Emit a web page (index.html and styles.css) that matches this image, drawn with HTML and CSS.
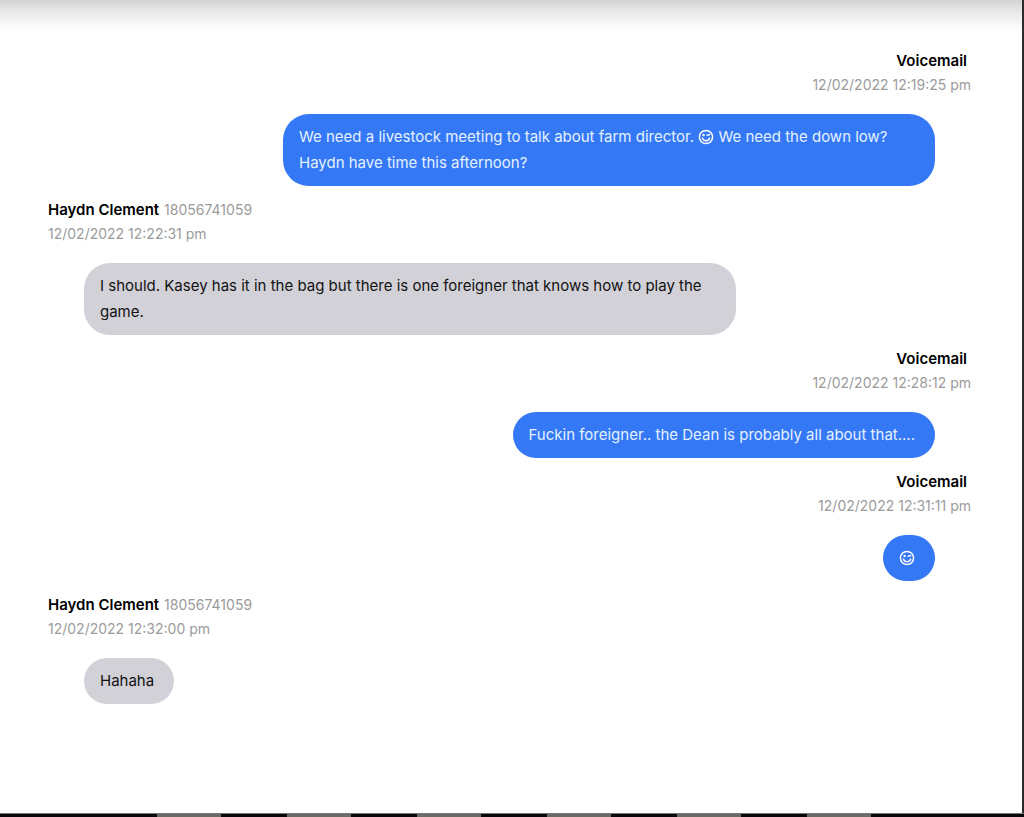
FILE: index.html
```html
<!DOCTYPE html>
<html lang="en">
<head>
  <meta charset="UTF-8">
  <meta name="viewport" content="width=device-width, initial-scale=1.0">
  <title>Messages</title>
  <link rel="stylesheet" href="styles.css">
</head>
<body>

  <!-- Wink face, reused inside the bubbles -->
  <svg class="sprite" aria-hidden="true">
    <symbol id="wink" viewBox="0 0 16 16">
      <circle cx="8" cy="8" r="6.6" fill="none" stroke="currentColor" stroke-width="1.5"/>
      <circle cx="5.6" cy="6" r="1.2" fill="currentColor"/>
      <path d="M9.2 6.2l2.4-.6" fill="none" stroke="currentColor" stroke-width="1.5" stroke-linecap="round"/>
      <path d="M4.4 9.2c1.3 3.3 5.9 3.3 7.2 0" fill="none" stroke="currentColor" stroke-width="1.6" stroke-linecap="round"/>
    </symbol>
  </svg>

  <main class="chat">
    <section class="message sent">
      <div class="meta">
        <div class="sender"><span class="name">Voicemail</span></div>
        <time class="time">12/02/2022 12:19:25 pm</time>
      </div>
      <p class="bubble">We need a livestock meeting to talk about farm director. <svg class="emoji" role="img" aria-label="wink"><use href="#wink"/></svg> We need the down low? Haydn have time this afternoon?</p>
    </section>

    <section class="message received">
      <div class="meta">
        <div class="sender"><span class="name">Haydn Clement</span> <span class="number">18056741059</span></div>
        <time class="time">12/02/2022 12:22:31 pm</time>
      </div>
      <p class="bubble">I should. Kasey has it in the bag but there is one foreigner that knows how to play the game.</p>
    </section>

    <section class="message sent">
      <div class="meta">
        <div class="sender"><span class="name">Voicemail</span></div>
        <time class="time">12/02/2022 12:28:12 pm</time>
      </div>
      <p class="bubble">Fuckin foreigner.. the Dean is probably all about that....</p>
    </section>

    <section class="message sent">
      <div class="meta">
        <div class="sender"><span class="name">Voicemail</span></div>
        <time class="time">12/02/2022 12:31:11 pm</time>
      </div>
      <p class="bubble"><svg class="emoji" role="img" aria-label="wink"><use href="#wink"/></svg></p>
    </section>

    <section class="message received">
      <div class="meta">
        <div class="sender"><span class="name">Haydn Clement</span> <span class="number">18056741059</span></div>
        <time class="time">12/02/2022 12:32:00 pm</time>
      </div>
      <p class="bubble">Hahaha</p>
    </section>
  </main>

  <div class="strip"></div>

</body>
</html>
```

FILE: styles.css
```css
/* Global styling */
* { box-sizing: border-box; }
body { display: flex; flex-direction: column; min-height: 100vh; margin: 0; background-color: #fff; font-family: Inter, sans-serif; font-size: 15px; font-optical-sizing: none; line-height: 26px; color: #111; }
.sprite { display: none; }

/* Conversation */
.chat { display: flex; flex-direction: column; flex: 1; gap: 12px; padding: 49px 51px 48px 48px; border-right: 2px solid #2b2b2b; background: linear-gradient(#d2d2d2, #e6e6e6 10px, #fafafa 26px, #fff 36px); }
.message { display: flex; flex-direction: column; align-items: flex-start; gap: 17px; }
.sent { align-items: flex-end; }

/* Sender and time */
.meta { line-height: 24px; font-size: 14px; color: #9b9b9b; }
.sent .meta { text-align: right; }
.sender { display: flex; gap: 5px; align-items: baseline; height: 24px; }
.sent .sender { justify-content: flex-end; padding-right: 4px; }
.name { font-size: 15px; font-weight: 600; color: #000; }
.time { display: block; }

/* Bubbles */
.bubble { max-width: 652px; margin: 0 36px; padding: 10px 20px 10px 16px; border-radius: 26px; background-color: #d2d1d8; }
.sent .bubble { background-color: #3478f6; color: #e4f1ff; }
.emoji { width: 16px; height: 16px; vertical-align: -3px; color: #fff; }

/* Bottom strip */
.strip { height: 4px; border-top: 1px solid #777; background: repeating-linear-gradient(90deg, #6b6b66 0 64px, #08080a 64px 130px) 157px 0 / 720px 100% no-repeat #08080a; }
```
